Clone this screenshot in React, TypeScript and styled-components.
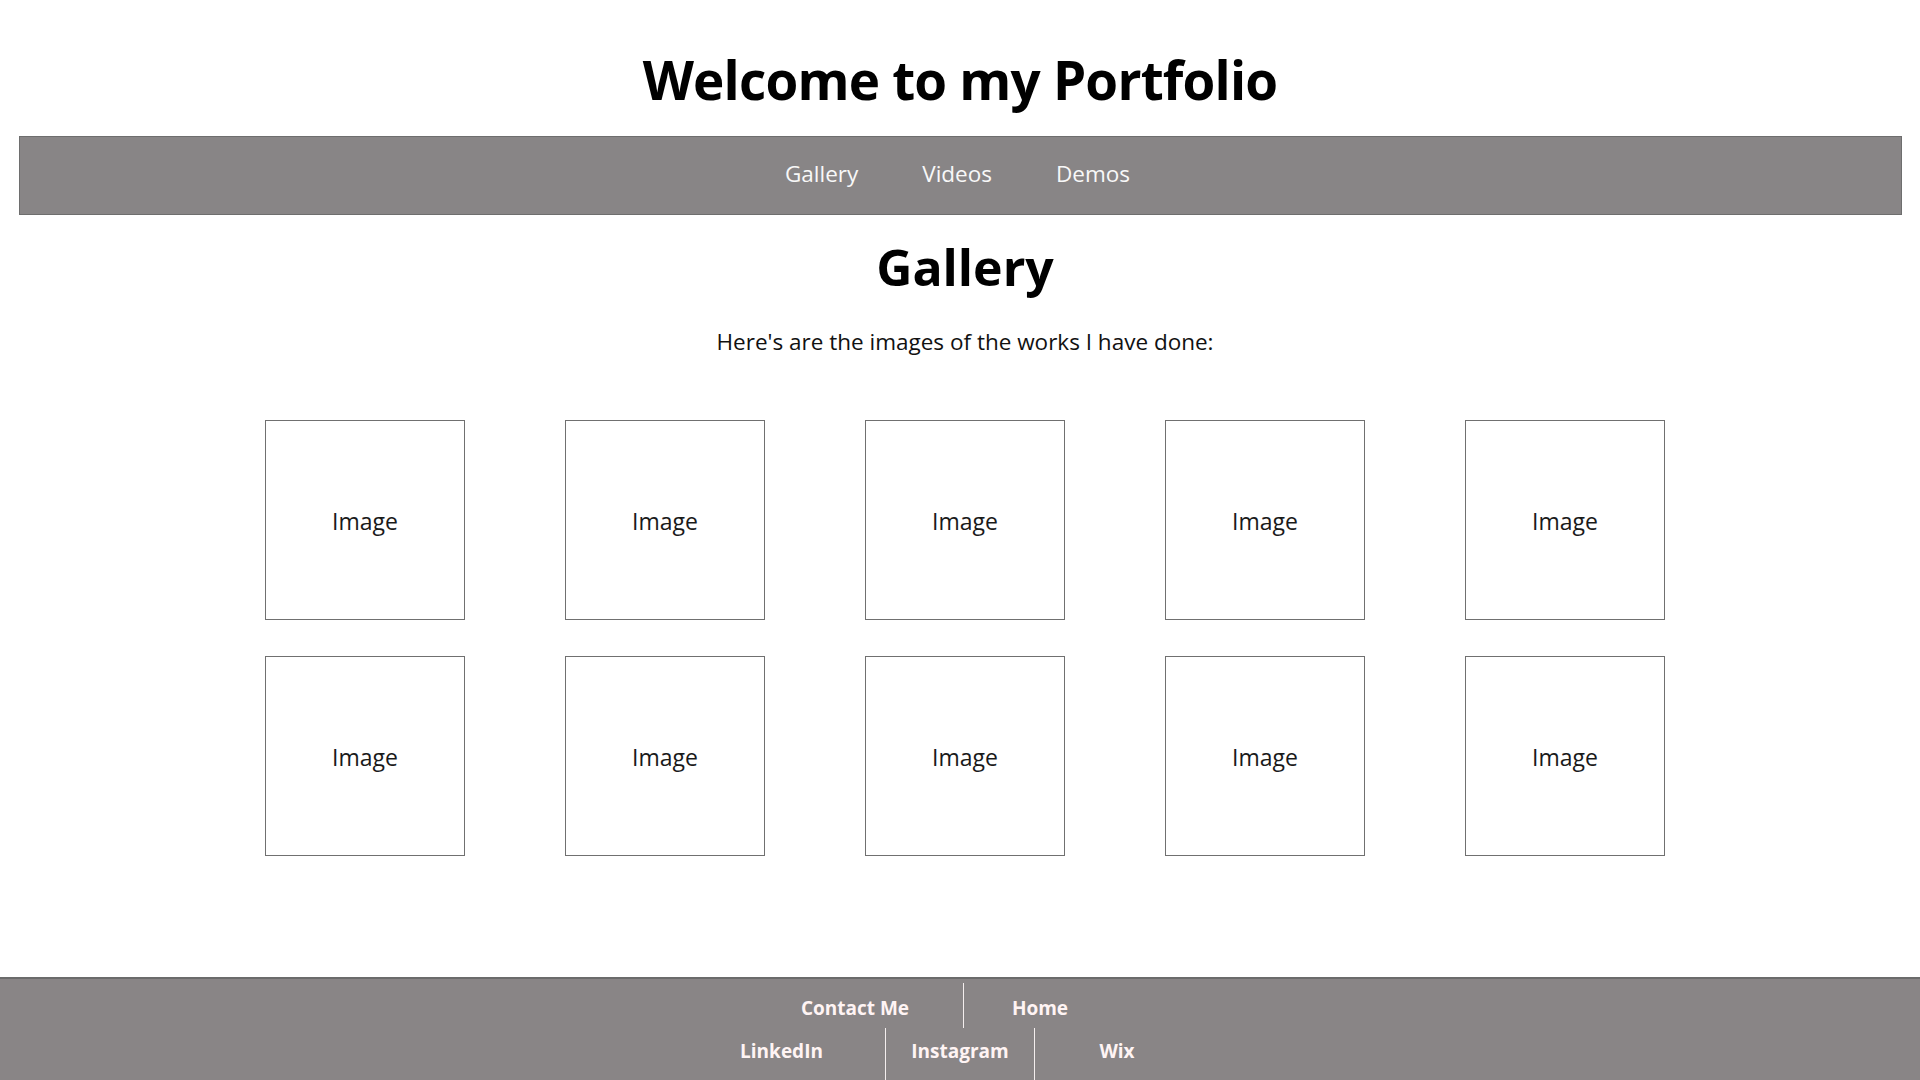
import React from "react";
import styled, { createGlobalStyle } from "styled-components";

const GlobalStyle = createGlobalStyle`
  body {
    margin: 0;
    background: #ffffff;
    font-family: "Open Sans", "Noto Sans", sans-serif;
    color: #000000;
  }
`;

const Header = styled.header`
  padding-top: 53px;
  margin-bottom: 30px;
`;

const Title = styled.h1`
  margin: 0;
  font-size: 53px;
  line-height: 1;
  font-weight: 700;
  letter-spacing: -0.8px;
  text-align: center;
`;

const NavBar = styled.nav`
  margin: 0 18px 0 19px;
  padding: 25.5px 6px 29px 0;
  background: #888586;
  border: 1px solid #6e6e6e;
  display: flex;
  justify-content: center;
  gap: 64px;
`;

const NavLink = styled.a`
  font-size: 22.5px;
  line-height: 1;
  color: #f8f8f8;
  text-decoration: none;
  cursor: pointer;
`;

const Main = styled.main`
  padding-left: 10px;
  margin-bottom: 121px;
`;

const SectionTitle = styled.h2`
  margin: 27px 0 0;
  font-size: 50px;
  line-height: 1;
  font-weight: 700;
  text-align: center;
`;

const Intro = styled.p`
  margin: 38.5px 0 0;
  font-size: 22.5px;
  line-height: 1;
  text-align: center;
  color: #111111;
`;

const Grid = styled.div`
  margin-top: 67px;
  display: grid;
  grid-template-columns: repeat(5, 200px);
  column-gap: 100px;
  row-gap: 36px;
  justify-content: center;
`;

const ImageBox = styled.div`
  box-sizing: border-box;
  width: 200px;
  height: 200px;
  padding-top: 2px;
  border: 1px solid #707070;
  display: flex;
  align-items: center;
  justify-content: center;
  font-size: 23px;
  color: #1a1a1a;
`;

const Footer = styled.footer`
  background: #898586;
  border-top: 2px solid #6b6b6b;
  padding-top: 4px;
`;

const FooterRow = styled.div<{ $shift: number; $height: number; $pad: number }>`
  display: flex;
  justify-content: center;
  padding-right: ${(p) => p.$shift}px;
  height: ${(p) => p.$height}px;

  & > a {
    padding-top: ${(p) => p.$pad}px;
  }
`;

const FooterCell = styled.a<{ $width: number; $left?: boolean; $right?: boolean }>`
  box-sizing: border-box;
  width: ${(p) => p.$width}px;
  text-align: center;
  font-size: 19px;
  line-height: 1;
  font-weight: 700;
  color: #fff4f4;
  text-decoration: none;
  border-left: ${(p) => (p.$left ? "1px solid #f4eeee" : "none")};
  border-right: ${(p) => (p.$right ? "1px solid #f4eeee" : "none")};
`;

const navItems = ["Gallery", "Videos", "Demos"];

export default function App() {
  const images = Array.from({ length: 10 }, (_, i) => i);
  return (
    <>
      <GlobalStyle />
      <Header>
        <Title>Welcome to my Portfolio</Title>
      </Header>
      <NavBar>
        {navItems.map((item) => (
          <NavLink key={item}>{item}</NavLink>
        ))}
      </NavBar>
      <Main>
        <SectionTitle>Gallery</SectionTitle>
        <Intro>Here's are the images of the works I have done:</Intro>
        <Grid>
          {images.map((i) => (
            <ImageBox key={i}>Image</ImageBox>
          ))}
        </Grid>
      </Main>
      <Footer>
        <FooterRow $shift={56} $height={45} $pad={16}>
          <FooterCell $width={216} $right>
            Contact Me
          </FooterCell>
          <FooterCell $width={153}>Home</FooterCell>
        </FooterRow>
        <FooterRow $shift={43} $height={56} $pad={14}>
          <FooterCell $width={207}>LinkedIn</FooterCell>
          <FooterCell $width={150} $left $right>
            Instagram
          </FooterCell>
          <FooterCell $width={164}>Wix</FooterCell>
        </FooterRow>
      </Footer>
    </>
  );
}
